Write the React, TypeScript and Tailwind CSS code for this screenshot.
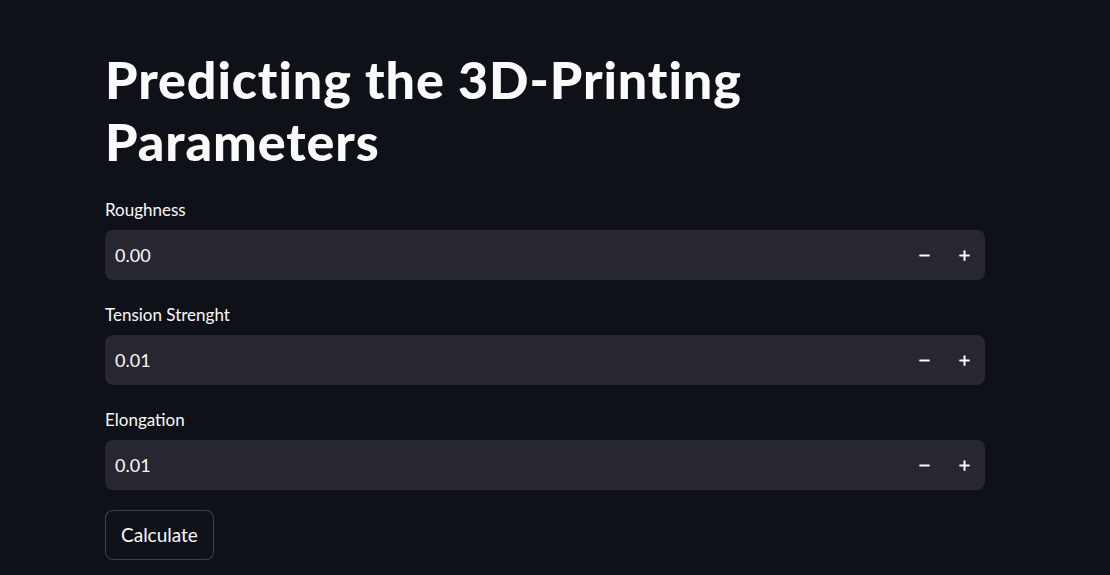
import { Minus, Plus } from "lucide-react";

type FieldProps = {
  label: string;
  value: string;
};

function NumberField({ label, value }: FieldProps) {
  return (
    <div className="mb-[25px]">
      <label className="block h-[22px] text-[17px] leading-[20px] text-[#fafafa]">{label}</label>
      <div className="mt-[8px] flex h-[50px] items-center rounded-[8px] bg-[#262730]">
        <div className="flex-1 pl-[10px] text-[18px] text-[#fafafa]">{value}</div>
        <button className="flex h-full w-[40px] items-center justify-center text-[#fafafa]">
          <Minus size={15} strokeWidth={3.2} />
        </button>
        <button className="mr-[1px] flex h-full w-[40px] items-center justify-center text-[#fafafa]">
          <Plus size={15} strokeWidth={3.2} />
        </button>
      </div>
    </div>
  );
}

export default function App() {
  return (
    <div
      className="min-h-screen bg-[#0e1117] text-[#fafafa]"
      style={{ fontFamily: "Lato, 'Noto Sans', sans-serif" }}
    >
      <div className="ml-[105px] w-[880px] pt-[48px]">
        <h1 className="mb-[28px] text-[52px] font-black leading-[62px] tracking-[0.9px]">
          Predicting the 3D-Printing
          <br />
          Parameters
        </h1>

        <NumberField label="Roughness" value="0.00" />
        <NumberField label="Tension Strenght" value="0.01" />
        <NumberField label="Elongation" value="0.01" />

        <button className="-mt-[5px] h-[50px] rounded-[8px] border border-[rgba(250,250,250,0.2)] bg-[#0e1117] px-[15px] text-[19px] text-[#fafafa]">
          Calculate
        </button>
      </div>
    </div>
  );
}
